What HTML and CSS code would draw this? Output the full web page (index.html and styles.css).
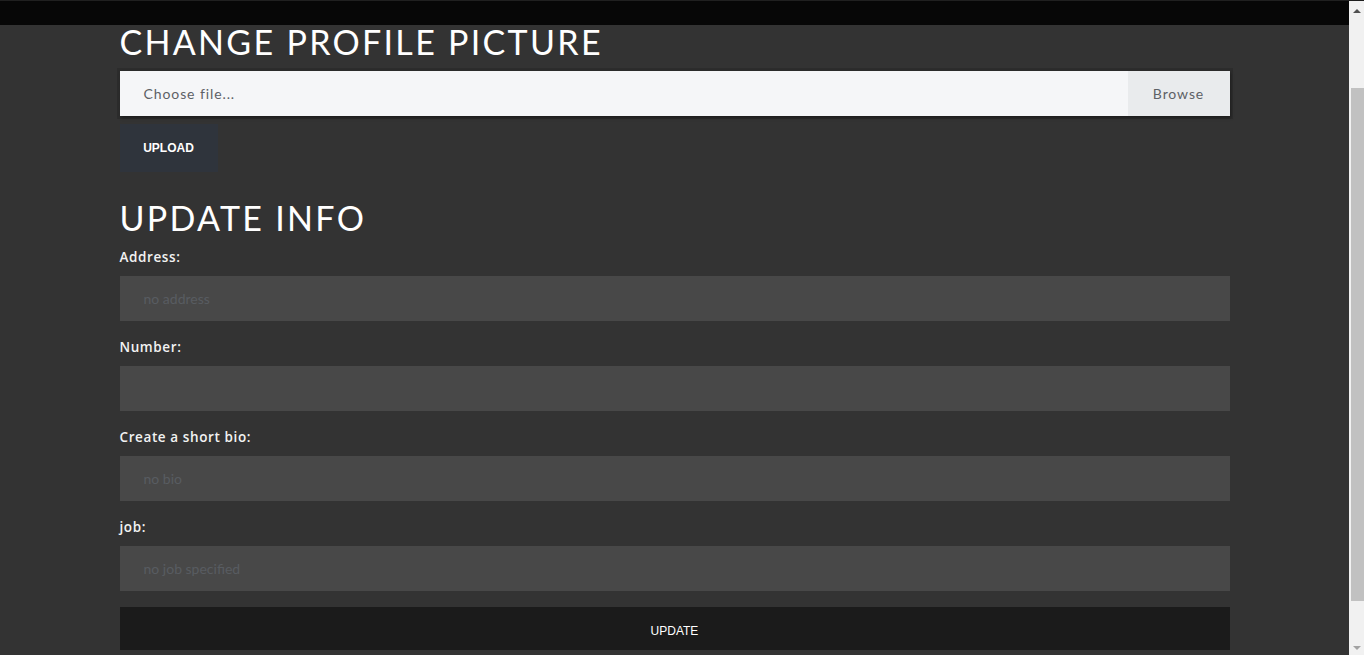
FILE: index.html
```html
<!DOCTYPE html>
<html lang="en">
<head>
<meta charset="utf-8">
<title>Profile</title>
<link rel="stylesheet" href="styles.css">
</head>
<body>
<div class="page">
  <nav class="topbar"></nav>
  <main class="container">
    <h2 class="section-title first">CHANGE PROFILE PICTURE</h2>
    <div class="file-field">
      <span class="file-label">Choose file...</span>
      <span class="file-browse">Browse</span>
    </div>
    <button class="btn-upload" type="button">UPLOAD</button>

    <h2 class="section-title second">UPDATE INFO</h2>
    <form class="info-form">
      <div class="group">
        <label class="field-label">Address:</label>
        <input class="field" type="text" placeholder="no address">
      </div>
      <div class="group">
        <label class="field-label">Number:</label>
        <input class="field" type="text">
      </div>
      <div class="group">
        <label class="field-label">Create a short bio:</label>
        <input class="field" type="text" placeholder="no bio">
      </div>
      <div class="group last">
        <label class="field-label">job:</label>
        <input class="field" type="text" placeholder="no job specified">
      </div>
      <button class="btn-update" type="button">UPDATE</button>
    </form>
  </main>
</div>
<aside class="scrollbar" aria-hidden="true">
  <div class="sb-btn"><span class="arrow-up"></span></div>
  <div class="sb-track"><div class="sb-thumb"></div></div>
  <div class="sb-btn"><span class="arrow-down"></span></div>
</aside>
</body>
</html>
```

FILE: styles.css
```css
html, body {
  height: 100%;
}
body {
  margin: 0;
  display: flex;
  overflow: hidden;
  background: #333333;
  font-family: "Lato", "Open Sans", sans-serif;
  color: #ffffff;
}
.page {
  flex: 1;
  min-width: 0;
  overflow: hidden;
}
.topbar {
  height: 24px;
  background: #070707;
  border-top: 1px solid #202020;
}
.container {
  max-width: 1110px;
  margin: 0 auto;
  padding: 0 15px;
}
.section-title {
  margin: 0;
  font-family: "Lato", sans-serif;
  font-weight: 400;
  font-size: 34px;
  line-height: 41px;
  letter-spacing: 2.3px;
  color: #ffffff;
}
.section-title.first {
  line-height: 34px;
}
.section-title.second {
  margin-top: 25px;
}
.file-field {
  margin-top: 12px;
  height: 45px;
  display: flex;
  align-items: stretch;
  background: #f5f6f8;
  box-shadow: 0 0 0 3px rgba(0, 0, 0, 0.12), 1px 2px 3px rgba(0, 0, 0, 0.35);
  font-family: "Lato", sans-serif;
  font-size: 14px;
  color: #5d6166;
  letter-spacing: 0.9px;
}
.file-label {
  flex: 1;
  display: flex;
  align-items: center;
  padding-left: 24px;
}
.file-browse {
  width: 102px;
  display: flex;
  align-items: center;
  justify-content: center;
  background: #e9ebed;
}
.btn-upload {
  display: block;
  margin-top: 8px;
  width: 98px;
  height: 48px;
  border: 0;
  background: #2f343c;
  color: #ffffff;
  font-family: "Liberation Sans", Arial, sans-serif;
  font-weight: 700;
  font-size: 12px;
  padding: 0;
}
.info-form {
  margin: 0;
}
.group {
  display: flex;
  flex-direction: column;
  margin-bottom: 15px;
}
.group.last {
  margin-bottom: 16px;
}
.field-label {
  margin-top: 8px;
  margin-bottom: 8px;
  font-family: "Open Sans", sans-serif;
  font-weight: 600;
  font-size: 13.5px;
  line-height: 22px;
  letter-spacing: 0.6px;
  color: #f2f2f2;
}
.group + .group .field-label {
  margin-top: 0;
}
.field {
  height: 45px;
  border: 0;
  margin: 0;
  padding: 0 24px;
  background: #484848;
  color: #dddddd;
  font-family: "Lato", sans-serif;
  font-size: 14px;
  outline: none;
}
.field::placeholder {
  color: #585c61;
}
.btn-update {
  display: block;
  width: 100%;
  height: 43px;
  border: 0;
  background: #1b1b1b;
  color: #ffffff;
  font-family: "Liberation Sans", Arial, sans-serif;
  font-size: 12px;
  padding: 4px 0 0;
}
.scrollbar {
  width: 15px;
  flex: none;
  display: flex;
  flex-direction: column;
  background: #f1f1f1;
  border-top: 1px solid #1e1e1e;
}
.sb-btn {
  height: 17px;
  display: flex;
  align-items: center;
  justify-content: center;
}
.arrow-up {
  width: 0;
  height: 0;
  border-left: 4px solid transparent;
  border-right: 4px solid transparent;
  border-bottom: 4px solid #505050;
  margin-top: 2px;
}
.arrow-down {
  width: 0;
  height: 0;
  border-left: 4px solid transparent;
  border-right: 4px solid transparent;
  border-top: 4px solid #a3a3a3;
  margin-top: 2px;
}
.sb-track {
  flex: 1;
  padding: 70px 0 0 2px;
}
.sb-thumb {
  height: 513px;
  background: #c1c1c1;
}
```
